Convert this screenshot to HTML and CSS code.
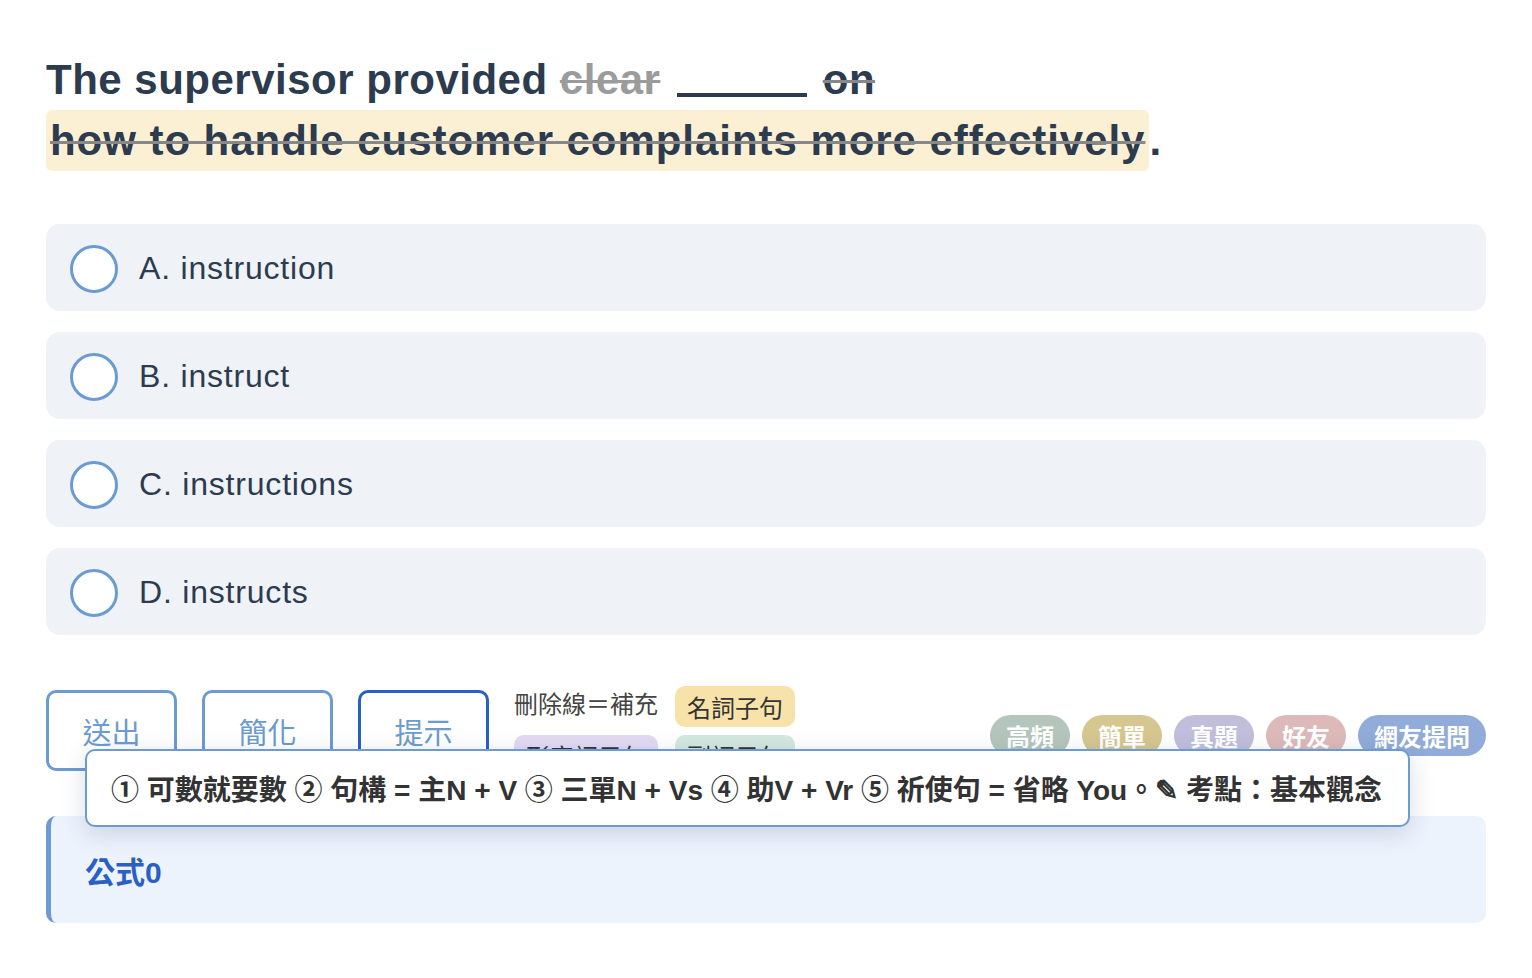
FILE: index.html
```html
<!DOCTYPE html>
<html>
  <head>
    <title>Quiz</title>
    <link rel="stylesheet" href="styles.css">
  </head>
  <body>
    <div class="page">
      <p class="question">
        The supervisor provided <span class="extra">clear</span> <span class="blank"></span> <span class="cut">on</span>
        <span class="note">how to handle customer complaints more effectively</span>.
      </p>

      <ul class="options">
        <li class="option"><span class="radio"></span>A. instruction</li>
        <li class="option"><span class="radio"></span>B. instruct</li>
        <li class="option"><span class="radio"></span>C. instructions</li>
        <li class="option"><span class="radio"></span>D. instructs</li>
      </ul>

      <div class="toolbar">
        <button class="btn">送出</button>
        <button class="btn">簡化</button>
        <button class="btn active">提示</button>
        <div class="legend">
          <span class="legend-text">刪除線＝補充</span>
          <span class="chip chip-noun">名詞子句</span>
          <span class="chip chip-adj">形容詞子句</span>
          <span class="chip chip-adv">副詞子句</span>
        </div>
        <div class="pills">
          <span class="pill pill-hot">高頻</span>
          <span class="pill pill-easy">簡單</span>
          <span class="pill pill-real">真題</span>
          <span class="pill pill-friend">好友</span>
          <span class="pill pill-ask">網友提問</span>
        </div>
        <div class="tooltip">① 可數就要數 ② 句構 = 主N + V ③ 三單N + Vs ④ 助V + Vr ⑤ 祈使句 = 省略 You。✎ 考點：基本觀念</div>
      </div>

      <div class="formula">公式0</div>
    </div>
  </body>
</html>
```

FILE: styles.css
```css
body { margin: 0; background: #fff; font-family: "Liberation Sans", "Noto Sans CJK TC", sans-serif; color: #2d3b4e; }
.page { padding: 49px 46px 40px; }

.question { margin: 0; font-size: 42px; font-weight: bold; line-height: 61px; letter-spacing: 0.5px; }
.question .extra { color: #9b9b9b; text-decoration: line-through; text-decoration-thickness: 3px; }
.question .blank { display: inline-block; width: 130px; height: 4px; margin: 0 4px; background: #2d3b4e; vertical-align: -3px; }
.question .cut { text-decoration: line-through; text-decoration-color: #888; text-decoration-thickness: 3px; }
.question .note { display: inline-block; background: #fbf0d3; border-radius: 6px; padding: 0 4px; letter-spacing: 0.95px; text-decoration: line-through; text-decoration-color: #888; text-decoration-thickness: 3px; }

.options { list-style: none; margin: 53px 0 0; padding: 0; display: flex; flex-direction: column; gap: 21px; }
.option { display: flex; align-items: center; height: 87px; padding: 0 24px; background: #eff3f8; border-radius: 14px; font-size: 32px; letter-spacing: 0.8px; padding-top: 2px; box-sizing: border-box; }
.radio { width: 42px; height: 42px; border: 3px solid #6b9bd1; border-radius: 50%; background: #fff; margin-right: 21px; flex-shrink: 0; }

.toolbar { position: relative; display: flex; align-items: flex-start; gap: 25px; margin-top: 55px; height: 81px; }
.btn { width: 131px; height: 81px; background: #fff; border: 3px solid #6b9bd1; border-radius: 10px; color: #6b9bd1; font-family: "Noto Sans CJK TC", sans-serif; font-size: 29px; padding-top: 1px; }
.btn.active { border-color: #2a5fc4; }

.legend { display: grid; grid-template-columns: auto auto; gap: 8px 17px; align-items: start; margin-top: -4px; }
.legend-text { font-family: "Noto Sans CJK TC", sans-serif; font-size: 24px; line-height: 34px; color: #444; }
.chip { font-family: "Noto Sans CJK TC", sans-serif; font-size: 24px; color: #333; padding: 2px 12px; border-radius: 10px; line-height: 37px; }
.chip-noun { background: #f7e3aa; }
.chip-adj { background: #e3d9f3; }
.chip-adv { background: #d4e8df; }

.pills { display: flex; gap: 12px; margin-left: auto; margin-top: 25px; }
.pill { font-family: "Noto Sans CJK TC", sans-serif; font-size: 24px; font-weight: bold; color: #fff; height: 41px; line-height: 41px; padding: 0 16px; border-radius: 21px; }
.pill-hot { background: #b4c6bb; }
.pill-easy { background: #d6c68f; }
.pill-real { background: #c0bedb; }
.pill-friend { background: #ddb9b9; }
.pill-ask { background: #91acd8; }

.tooltip { position: absolute; left: 39px; top: 59px; width: 1325px; box-sizing: border-box; height: 78px; padding: 0 24px; display: flex; align-items: center; background: #fff; border: 2px solid #6b9bd1; border-radius: 10px; box-shadow: 0 6px 24px rgba(40, 60, 90, 0.18); font-size: 28px; font-weight: bold; color: #333; white-space: nowrap; }

.formula { margin-top: 45px; height: 107px; box-sizing: border-box; display: flex; align-items: center; padding-left: 34px; background: #ecf3fd; border-left: 5px solid #6b9bd1; border-radius: 10px; color: #2a5fc4; font-size: 30px; font-weight: bold; }
```
